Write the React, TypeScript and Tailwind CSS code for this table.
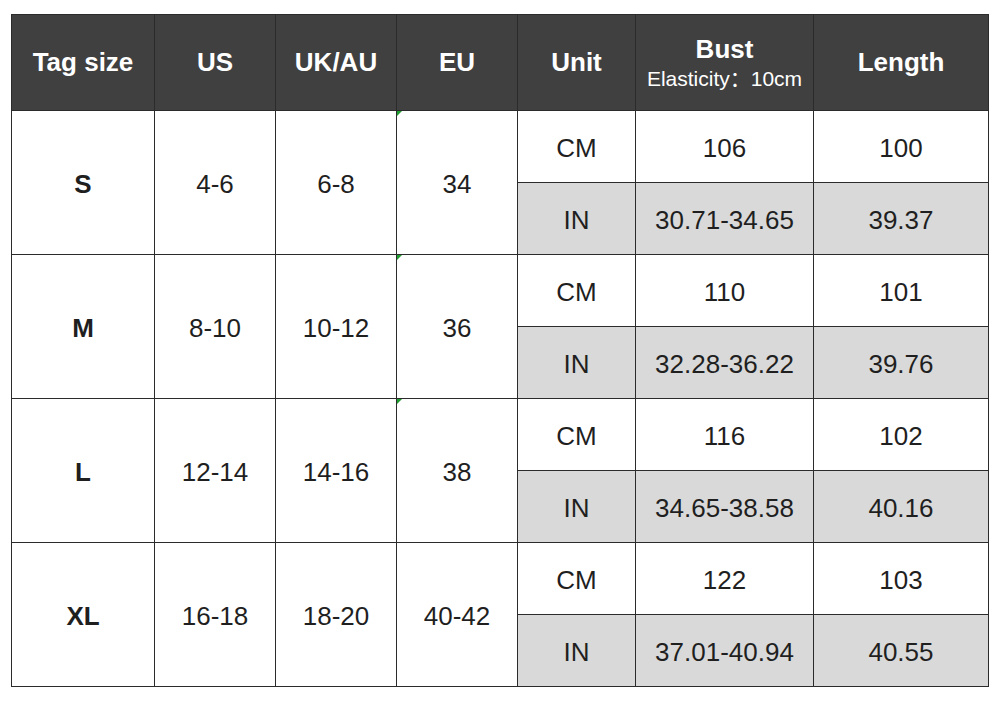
import React from "react";

type SizeRow = {
  tag: string;
  us: string;
  uk: string;
  eu: string;
  bustCm: string;
  lenCm: string;
  bustIn: string;
  lenIn: string;
  note: boolean;
};

const rows: SizeRow[] = [
  { tag: "S", us: "4-6", uk: "6-8", eu: "34", bustCm: "106", lenCm: "100", bustIn: "30.71-34.65", lenIn: "39.37", note: true },
  { tag: "M", us: "8-10", uk: "10-12", eu: "36", bustCm: "110", lenCm: "101", bustIn: "32.28-36.22", lenIn: "39.76", note: true },
  { tag: "L", us: "12-14", uk: "14-16", eu: "38", bustCm: "116", lenCm: "102", bustIn: "34.65-38.58", lenIn: "40.16", note: true },
  { tag: "XL", us: "16-18", uk: "18-20", eu: "40-42", bustCm: "122", lenCm: "103", bustIn: "37.01-40.94", lenIn: "40.55", note: false },
];

const head = "flex items-center justify-center bg-[#404040] text-white font-bold text-[26px]";
const cell = "flex items-center justify-center bg-white text-[#1f1f1f] text-[26px] pt-[3px]";
const grayCell = "flex items-center justify-center bg-[#d9d9d9] text-[#1f1f1f] text-[26px] pt-[3px]";

function App() {
  return (
    <div className="min-h-[703px] bg-white pl-[11px] pt-[14px]" style={{ fontFamily: '"Liberation Sans", Arial, "Noto Sans CJK SC", sans-serif' }}>
      <div className="grid w-[978px] grid-cols-[142px_120px_120px_120px_117px_177px_174px] grid-rows-[95px_repeat(8,71px)] gap-px border border-[#2b2b2b] bg-[#2b2b2b]">
        <div className={head}>Tag size</div>
        <div className={head}>US</div>
        <div className={head}>UK/AU</div>
        <div className={head}>EU</div>
        <div className={head}>Unit</div>
        <div className={`${head} flex-col pt-[2px]`}>
          <span className="leading-[28px]">Bust</span>
          <span className="text-[21px] font-normal leading-[28px]">
            Elasticity<span style={{ fontFamily: '"Noto Sans CJK SC", sans-serif' }}>：</span>10cm
          </span>
        </div>
        <div className={head}>Length</div>

        {rows.map((r) => (
          <React.Fragment key={r.tag}>
            <div className={`${cell} row-span-2 font-bold`}>{r.tag}</div>
            <div className={`${cell} row-span-2`}>{r.us}</div>
            <div className={`${cell} row-span-2`}>{r.uk}</div>
            <div className={`${cell} relative row-span-2`}>
              {r.note && (
                <span className="absolute left-0 top-0 h-0 w-0 border-r-[5px] border-t-[5px] border-r-transparent border-t-[#1e9e2e]" />
              )}
              {r.eu}
            </div>
            <div className={cell}>CM</div>
            <div className={cell}>{r.bustCm}</div>
            <div className={cell}>{r.lenCm}</div>
            <div className={grayCell}>IN</div>
            <div className={grayCell}>{r.bustIn}</div>
            <div className={grayCell}>{r.lenIn}</div>
          </React.Fragment>
        ))}
      </div>
    </div>
  );
}

export default App;
